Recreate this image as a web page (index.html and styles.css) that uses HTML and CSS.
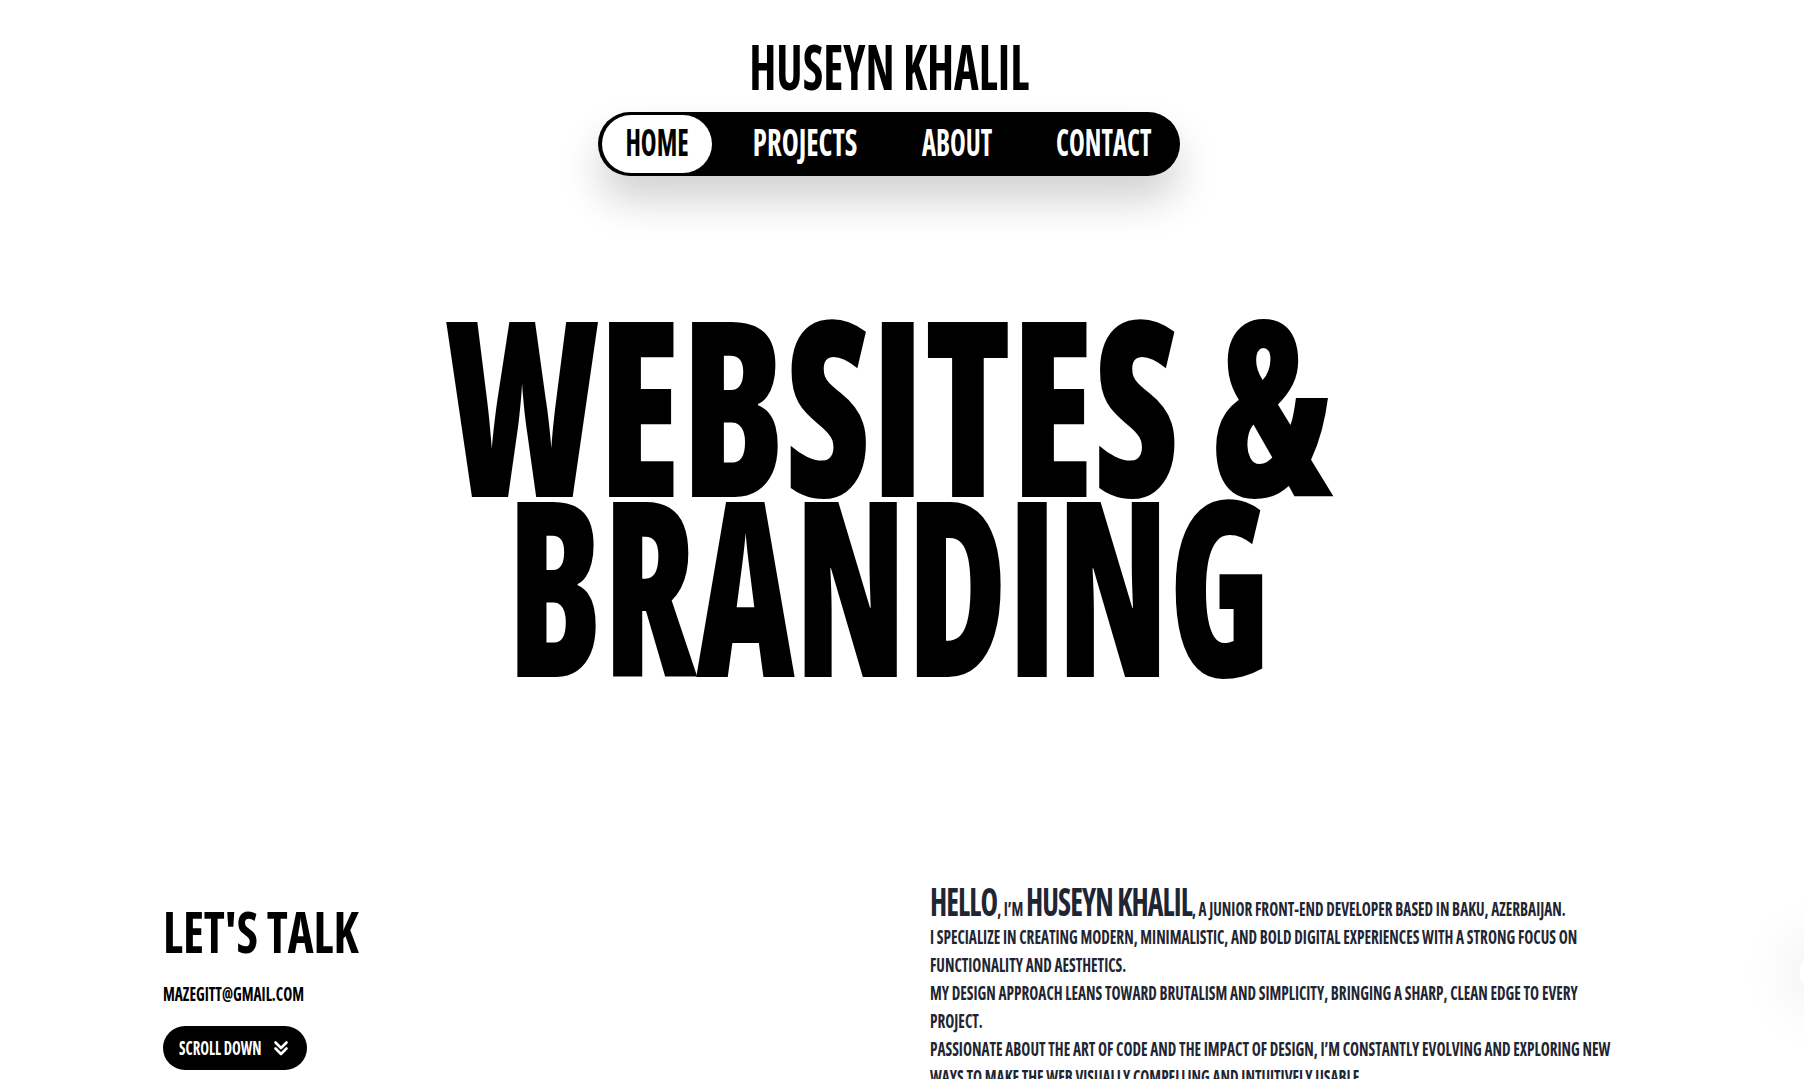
FILE: index.html
```html
<!DOCTYPE html>
<html lang="en">
<head>
<meta charset="utf-8">
<title>Huseyn Khalil</title>
<link rel="stylesheet" href="styles.css">
</head>
<body>
<div class="page">
  <header class="top">
    <h1 class="brand"><span class="sx brand-text">HUSEYN KHALIL</span></h1>
    <nav class="nav">
      <a class="nav-link active w-home" href="#"><span class="sx nav-text">HOME</span></a>
      <a class="nav-link w-projects" href="#"><span class="sx nav-text nav-projects">PROJECTS</span></a>
      <a class="nav-link w-about" href="#"><span class="sx nav-text">ABOUT</span></a>
      <a class="nav-link w-contact" href="#"><span class="sx nav-text">CONTACT</span></a>
    </nav>
  </header>

  <section class="hero">
    <h2 class="hero-title">
      <span class="hero-line"><span class="sx hero-text hero-first">WEBSITES &amp;</span></span>
      <span class="hero-line"><span class="sx hero-text hero-second">BRANDING</span></span>
    </h2>
  </section>

  <section class="info">
    <div class="talk">
      <h3 class="talk-title"><span class="sx talk-text">LET'S TALK</span></h3>
      <p class="email"><span class="sx email-text">MAZEGITT@GMAIL.COM</span></p>
      <a class="scroll-btn" href="#">
        <span class="sx scroll-text">SCROLL DOWN</span>
        <svg class="chev" viewBox="0 0 18 18" width="18" height="18" aria-hidden="true">
          <path d="M3.5 3.5 L9 9 L14.5 3.5" />
          <path d="M3.5 9.5 L9 15 L14.5 9.5" />
        </svg>
      </a>
    </div>
    <div class="about">
      <div class="about-inner">
        <p class="about-line"><span class="big">HELLO</span>, I’M <span class="big">HUSEYN KHALIL</span>, A JUNIOR FRONT-END DEVELOPER BASED IN BAKU, AZERBAIJAN.</p>
        <p class="about-line">I SPECIALIZE IN CREATING MODERN, MINIMALISTIC, AND BOLD DIGITAL EXPERIENCES WITH A STRONG FOCUS ON FUNCTIONALITY AND AESTHETICS.</p>
        <p class="about-line">MY DESIGN APPROACH LEANS TOWARD BRUTALISM AND SIMPLICITY, BRINGING A SHARP, CLEAN EDGE TO EVERY PROJECT.</p>
        <p class="about-line">PASSIONATE ABOUT THE ART OF CODE AND THE IMPACT OF DESIGN, I’M CONSTANTLY EVOLVING AND EXPLORING NEW WAYS TO MAKE THE WEB VISUALLY COMPELLING AND INTUITIVELY USABLE.</p>
      </div>
    </div>
  </section>
</div>
<div class="orb"></div>
</body>
</html>
```
FILE: styles.css
```css
html, body {
  margin: 0;
  padding: 0;
  background: #ffffff;
  overflow: hidden;
}

body {
  font-family: "Open Sans", "Liberation Sans", sans-serif;
  font-stretch: 75%;
  font-weight: 700;
  color: #000;
}

.page {
  width: 1778px;
  height: 1079px;
  overflow: hidden;
}

.sx {
  display: inline-block;
  transform: scaleX(var(--sx, 0.74));
  transform-origin: center center;
  white-space: nowrap;
}

/* header */
.top {
  display: flex;
  flex-direction: column;
  align-items: center;
  padding-top: 35px;
}

.brand {
  margin: 0;
  font-size: 62px;
  line-height: 62px;
  font-weight: 700;
}

.brand-text { --sx: 0.756; }

.nav {
  margin-top: 15px;
  display: flex;
  gap: 16px;
  padding: 3px 4px;
  background: #000;
  border-radius: 40px;
  box-shadow: 0 24px 40px rgba(0, 0, 0, 0.18);
}

.nav-link {
  display: flex;
  justify-content: center;
  height: 58px;
  box-sizing: border-box;
  padding-bottom: 6px;
  border-radius: 29px;
  color: #fff;
  text-decoration: none;
  font-size: 38px;
  line-height: 52px;
  font-weight: 700;
}

.nav-text { --sx: 0.703; }
.nav-projects { --sx: 0.756; }

.nav-link.active {
  background: #fff;
  color: #000;
}

.w-home { width: 110px; }
.w-projects { width: 154px; }
.w-about { width: 118px; }
.w-contact { width: 144px; }

/* hero */
.hero {
  margin-top: 136px;
  display: flex;
  justify-content: center;
}

.hero-title {
  margin: 0;
  font-size: 245px;
  line-height: 180px;
  font-weight: 760;
  text-align: center;
}

.hero-line {
  display: block;
}

.hero-first { --sx: 0.765; }
.hero-second { --sx: 0.699; }

/* info */
.info {
  margin-top: 215px;
  padding: 0 162px 0 163px;
  display: grid;
  grid-template-columns: 767px 1fr;
}

.talk {
  padding-top: 15px;
}

.talk-title {
  margin: 0;
  font-size: 57px;
  line-height: 58px;
  font-weight: 700;
}

.talk-text,
.email-text,
.scroll-text {
  transform-origin: left center;
}

.talk-text { --sx: 0.861; }
.email-text { --sx: 0.765; }

.email {
  margin: 24px 0 0;
  font-size: 20px;
  line-height: 20px;
  font-weight: 700;
}

.scroll-btn {
  margin-top: 22px;
  display: inline-flex;
  align-items: center;
  height: 44px;
  width: 144px;
  box-sizing: border-box;
  padding: 0 0 0 16px;
  border-radius: 22px;
  background: #000;
  color: #fff;
  text-decoration: none;
  font-size: 20px;
  line-height: 20px;
  font-weight: 700;
}

.scroll-text {
  width: 84px;
}

.chev {
  margin-left: 9px;
  fill: none;
  stroke: #fff;
  stroke-width: 2.6;
  stroke-linecap: round;
  stroke-linejoin: round;
}

.about {
  color: #1f2633;
}

.about-inner {
  width: 904px;
  transform: scaleX(0.763);
  transform-origin: left top;
  font-size: 20px;
  line-height: 28px;
  font-weight: 700;
}

.about-line {
  margin: 0;
}

.big {
  font-size: 39px;
  line-height: 28px;
  letter-spacing: -1.2px;
}

/* side orb */
.orb {
  position: fixed;
  right: -46px;
  top: 948px;
  width: 50px;
  height: 50px;
  border-radius: 50%;
  background: #fff;
  box-shadow: 0 0 60px 12px rgba(0, 0, 0, 0.07);
}
```
